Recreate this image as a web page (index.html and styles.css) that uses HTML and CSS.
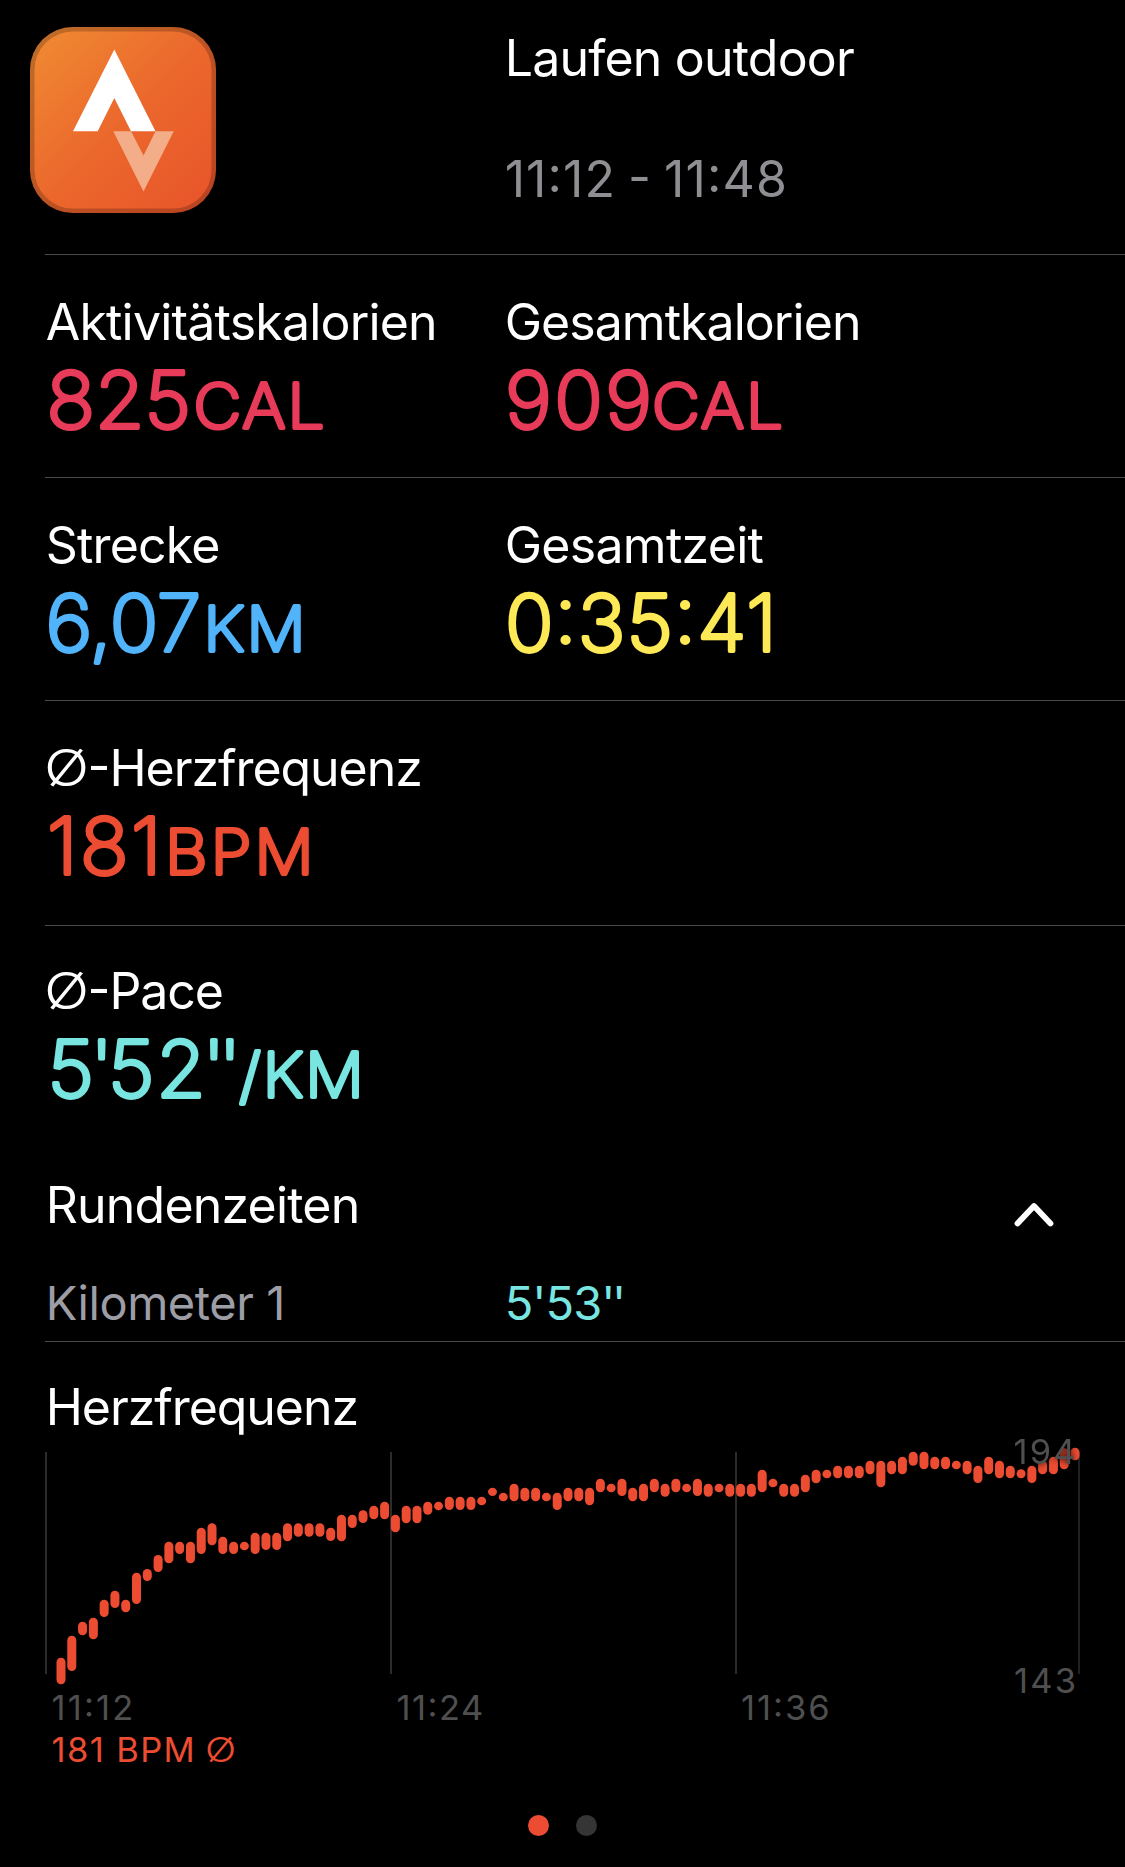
FILE: index.html
```
<!DOCTYPE html>
<html lang="de">
<head>
<meta charset="utf-8">
<title>Laufen outdoor</title>
<link rel="stylesheet" href="styles.css">
</head>
<body>
<main class="workout">
  <header class="row head">
    <div class="col">
      <svg class="app-icon" viewBox="0 0 186 186">
        <defs>
          <linearGradient id="orange" x1="0" y1="0" x2="1" y2="1">
            <stop offset="0" stop-color="#f08c33"/>
            <stop offset="0.5" stop-color="#eb682c"/>
            <stop offset="1" stop-color="#e8532a"/>
          </linearGradient>
        </defs>
        <rect width="186" height="186" rx="43" fill="url(#orange)"/>
        <rect x="2.25" y="2.25" width="181.5" height="181.5" rx="41" fill="none" stroke="#000" stroke-opacity=".2" stroke-width="4.5"/>
        <path d="M84.300 22.500 125.500 104.300H101L84.300 71 67.700 104.300H43z" fill="#fff"/>
        <path d="M83.300 104.300H101L113.500 128.500 125.500 104.300H143.700L113.500 164.500z" fill="#f3ae89"/>
      </svg>
    </div>
    <div class="col">
      <div class="label title">Laufen outdoor</div>
      <div class="label time">11:12 - 11:48</div>
    </div>
  </header>

  <section class="row">
    <div class="col">
      <div class="label">Aktivitätskalorien</div>
      <svg class="value energy" viewBox="0 0 460 96">
        <text class="num" transform="translate(1.500 76.200) scale(1.03 1)">825</text>
        <text class="unit" transform="translate(148.500 76.200) scale(1.08 1)">CAL</text>
      </svg>
    </div>
    <div class="col">
      <div class="label kcal">Gesamtkalorien</div>
      <svg class="value energy" viewBox="0 0 460 96">
        <text class="num wide" transform="translate(1 76.200) scale(1.03 1)">909</text>
        <text class="unit" transform="translate(148 76.200) scale(1.08 1)">CAL</text>
      </svg>
    </div>
  </section>

  <section class="row">
    <div class="col">
      <div class="label">Strecke</div>
      <svg class="value distance" viewBox="0 0 460 96">
        <text class="num" transform="translate(.5 76.200) scale(1.03 1)">6,07</text>
        <text class="unit" transform="translate(158.500 76.200) scale(1.08 1)">KM</text>
      </svg>
    </div>
    <div class="col">
      <div class="label total">Gesamtzeit</div>
      <svg class="value duration" viewBox="0 0 460 96">
        <text class="num clock" transform="translate(1 76.200) scale(1.03 1)">0:35:41</text>
      </svg>
    </div>
  </section>

  <section class="row">
    <div class="col">
      <div class="label hf"><span class="avg">Ø</span>-Herzfrequenz</div>
      <svg class="value heart" viewBox="0 0 460 96">
        <text class="num wide" transform="translate(2 76.200) scale(1.03 1)">181</text>
        <text class="unit bpm" transform="translate(120 76.200) scale(1.08 1)">BPM</text>
      </svg>
    </div>
  </section>

  <section class="row pace-row">
    <div class="col">
      <div class="label hf"><span class="avg">Ø</span>-Pace</div>
      <svg class="value pace" viewBox="0 0 460 96">
        <text class="num" x="0 41.500 58.700 105.500 150.500 166" transform="translate(2.500 76.200) scale(1.03 1)">5'52''</text>
        <text class="unit" transform="translate(194 76.200) scale(1.07 1)">/KM</text>
      </svg>
    </div>
  </section>

  <section class="laps">
    <div class="laps-head">
      <div class="label">Rundenzeiten</div>
      <svg class="chevron" viewBox="0 0 42 28"><path d="M4.500 22.500 21 5 37.500 22.500"/></svg>
    </div>
    <div class="lap">
      <div class="col km">Kilometer 1</div>
      <div class="col pace">5'53<span class="sec">''</span></div>
    </div>
  </section>

  <section class="heart-rate">
    <div class="label hf">Herzfrequenz</div>
    <svg class="chart" viewBox="0 1435 1125 345">
      <g class="grid">
        <path d="M46 1452V1674M391 1452V1674M736 1452V1674"/>
        <path d="M1079 1452V1674" stroke-width="1.500"/>
      </g>
      <g id="bars" class="bars"></g>
      <g class="axis">
        <text class="max" x="1013.500" y="1463.500">194</text>
        <text class="min" x="1014" y="1692.500">143</text>
        <text class="t1" x="51.500" y="1719.500">11:12</text>
        <text class="t2" x="396.500" y="1719.500">11:24</text>
        <text class="t3" x="741" y="1719.500">11:36</text>
        <text class="summary" x="51.500" y="1761.500">181 BPM</text>
        <text class="summary thin" transform="translate(205 1761.500) scale(1.19 1)">Ø</text>
      </g>
    </svg>
  </section>

  <nav class="pages"><i class="dot on"></i><i class="dot"></i></nav>
</main>
<script src="chart.js"></script>
</body>
</html>
```
FILE: styles.css
```
* { box-sizing: border-box; }

body {
  margin: 0;
  background: #000;
  color: #fff;
  font-family: Inter, "Liberation Sans", sans-serif;
  font-feature-settings: "calt" 1;
}

.workout {
  display: flex;
  flex-direction: column;
  height: 1867px;
  overflow: hidden;
}

.row {
  display: grid;
  grid-template-columns: 459px 1fr;
  height: 223px;
  margin-left: 45px;
  padding-top: 37px;
  border-bottom: 1px solid #4b4b4d;
}

.row.head {
  height: 255px;
  padding-top: 27px;
}

.app-icon {
  display: block;
  width: 186px;
  height: 186px;
  margin-left: -15px;
}

.label {
  height: 60px;
  padding-left: 0.7px;
  font-size: 50px;
  line-height: 60px;
  letter-spacing: -0.8px;
  white-space: nowrap;
}

.title { margin-top: 1px; }
.kcal { letter-spacing: -0.95px; }
.total { letter-spacing: -0.7px; }
.hf { letter-spacing: -1.05px; }

.time {
  margin-top: 61px;
  color: #8e8e93;
  letter-spacing: 1.1px;
  word-spacing: -3.2px;
}

.avg {
  display: inline-block;
  width: 43.5px;
  margin-left: -1.7px;
  font-weight: 300;
  letter-spacing: 0;
  transform: scaleX(1.19);
  transform-origin: left;
}

.value {
  display: block;
  width: 460px;
  height: 96px;
  fill: currentColor;
  stroke: currentColor;
  stroke-width: 3.8px;
  stroke-linejoin: round;
  font-weight: 200;
}

.num { font-size: 78px; }
.num.wide { letter-spacing: 2.4px; }
.num.clock { letter-spacing: 1px; }
.unit { font-size: 61px; letter-spacing: 1.8px; }
.unit.bpm { letter-spacing: 3px; }

.energy { color: #e83a59; }
.distance { color: #51b4fb; }
.duration { color: #fde855; }
.heart { color: #ec4c31; }
.pace { color: #78e5e0; }

.row:nth-of-type(3) { height: 225px; }

.pace-row {
  height: 249px;
  padding-top: 35px;
  border-bottom: 0;
}

.laps {
  height: 167px;
  margin-left: 45px;
  border-bottom: 1px solid #4b4b4d;
}

.laps-head {
  display: flex;
  justify-content: space-between;
  align-items: center;
  padding-right: 70px;
  height: 60px;
}

.chevron {
  width: 42px;
  height: 28px;
  margin-top: 19px;
  fill: none;
  stroke: #fff;
  stroke-width: 5.8px;
  stroke-linecap: round;
  stroke-linejoin: round;
}

.lap {
  display: grid;
  grid-template-columns: 459px 1fr;
  margin-top: 38px;
  color: #9d9da5;
  font-size: 47px;
  line-height: 60px;
}

.km { padding-left: 0.7px; letter-spacing: -0.45px; }
.lap .pace { color: #78e5e0; letter-spacing: -0.9px; padding-left: 0.7px; }
.sec { letter-spacing: -3.5px; }

.heart-rate { padding-top: 35px; }
.heart-rate .label { margin-left: 45px; }

.chart {
  display: block;
  width: 1125px;
  height: 345px;
  margin-top: -2px;
}

.grid { stroke: #2c2c2c; stroke-width: 2px; }
.bars { fill: #ec4c31; }

.axis {
  fill: #4f4f4f;
  font-size: 34.5px;
  font-weight: 380;
}

.max { letter-spacing: 2.2px; filter: drop-shadow(0 0 3px #000); }
.min { letter-spacing: 2.2px; }
.t1 { letter-spacing: 2.2px; }
.t2 { letter-spacing: 1.5px; }
.t3 { letter-spacing: 2px; }
.summary { fill: #ec4c31; letter-spacing: 1.4px; }
.thin { font-weight: 300; }

.pages {
  display: flex;
  justify-content: center;
  gap: 27px;
  margin-top: 35px;
}

.dot {
  width: 21px;
  height: 21px;
  border-radius: 50%;
  background: #353535;
}

.dot.on { background: #ec4c31; }
```
FILE: chart.js
```
// Each pair is the top and bottom edge of one heart-rate range bar.
const ranges = [
  [1657.700, 1684.300], [1635.700, 1671], [1621.700, 1635.300], [1617.700, 1639.300],
  [1599.700, 1617], [1590.700, 1608], [1599.700, 1612.300], [1572.700, 1604],
  [1569, 1581], [1555, 1572], [1541.700, 1563.300], [1541.700, 1554], [1541.700, 1563.300],
  [1527.700, 1554], [1523.300, 1545.300], [1536.700, 1554], [1541.700, 1554],
  [1541.700, 1550.300], [1532.700, 1554], [1532.700, 1550], [1532.700, 1550],
  [1523.300, 1541.300], [1523.300, 1536.700], [1523.300, 1536.700], [1523.300, 1536.700],
  [1527.700, 1541], [1514.700, 1541.300], [1514.700, 1528], [1510.300, 1523],
  [1505.700, 1519.300], [1501.700, 1519.300], [1514.700, 1532.300], [1505.700, 1523.300],
  [1505.700, 1523.300], [1501.700, 1514.700], [1501.700, 1510.300], [1496.700, 1510],
  [1496.700, 1510], [1496.700, 1510], [1496.700, 1505.300], [1487.700, 1496],
  [1492.700, 1501.300], [1483.700, 1501.300], [1487.700, 1501.300], [1487.700, 1501.300],
  [1492.700, 1501.300], [1492.700, 1510], [1487.700, 1501.300], [1487.700, 1501.300],
  [1487.700, 1505.300], [1478.700, 1492.300], [1483.700, 1492.300], [1478.700, 1496],
  [1487.700, 1501.300], [1483.700, 1501.300], [1478.700, 1492.300], [1483.700, 1496.700],
  [1478.700, 1492.300], [1483.700, 1492.300], [1478.700, 1496], [1483.700, 1496.700],
  [1483.700, 1492.300], [1483.700, 1496.700], [1483.700, 1496.700], [1483.700, 1496.700],
  [1469.700, 1492.300], [1478.700, 1487.300], [1483.700, 1496.700], [1483.700, 1496.700],
  [1474.700, 1492.300], [1469.700, 1483.300], [1469.700, 1478.300], [1465.700, 1478.300],
  [1465.700, 1478.300], [1465.700, 1478.300], [1460.700, 1474.300], [1460.700, 1487.300],
  [1460.700, 1474.300], [1456.700, 1474.300], [1451.700, 1465.700], [1451.700, 1469.300],
  [1456.700, 1469.300], [1456.700, 1469.300], [1460.700, 1469.300], [1460.700, 1474.300],
  [1465.700, 1483], [1456.700, 1474.300], [1460.700, 1478.300], [1465.700, 1478.300],
  [1469.300, 1478.300], [1465.700, 1483], [1460.700, 1474.300], [1456.700, 1474.300],
  [1448.300, 1469.300], [1447.700, 1460.300]
];
const first = 61, last = 1075;
const step = (last - first) / (ranges.length - 1);
document.getElementById('bars').innerHTML = ranges.map(([top, bottom], i) =>
  `<rect x="${(first + i * step - 4.5).toFixed(2)}" y="${top}" width="9" height="${(bottom - top).toFixed(1)}" rx="4.500"/>`
).join('');
```
